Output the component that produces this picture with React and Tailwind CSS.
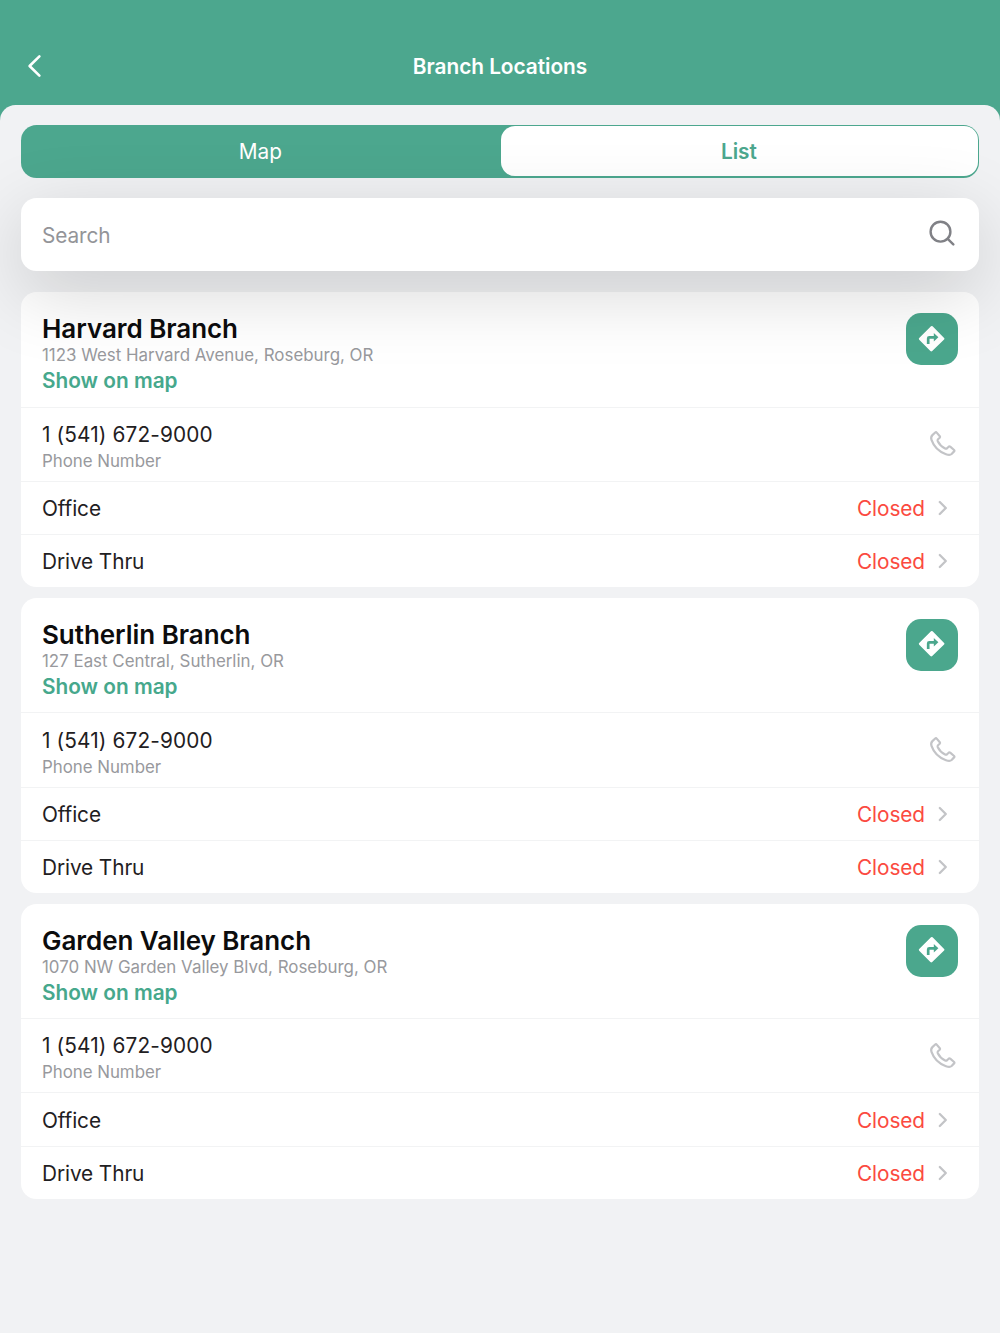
import React from "react";

const branches = [
  { name: "Harvard Branch", address: "1123 West Harvard Avenue, Roseburg, OR", phone: "1 (541) 672-9000" },
  { name: "Sutherlin Branch", address: "127 East Central, Sutherlin, OR", phone: "1 (541) 672-9000" },
  { name: "Garden Valley Branch", address: "1070 NW Garden Valley Blvd, Roseburg, OR", phone: "1 (541) 672-9000" },
];

function HoursRow({ label }) {
  return (
    <div className="flex h-[53.3px] items-center justify-between border-t-[1.5px] border-[#f2f3f4] pt-[2px] pl-[21px] pr-[30px]">
      <span className="text-[20.8px] leading-[26px] tracking-[-0.1px] text-[#1f2022]">{label}</span>
      <span className="flex items-center gap-[12px]">
        <span className="text-[20.8px] leading-[26px] tracking-[-0.08px] text-[#fb4a40]">Closed</span>
        <svg className="-mt-[2px] h-[16px] w-[12px]" viewBox="0 0 12 16" fill="none" stroke="#c3c4c7" strokeWidth="2.3" strokeLinecap="round" strokeLinejoin="round">
          <path d="M2.800 2 8.800 8l-6 6" />
        </svg>
      </span>
    </div>
  );
}

function BranchCard({ branch }) {
  return (
    <article className="h-[295.2px] overflow-hidden rounded-[15.6px] bg-white">
      <div className="flex h-[114.4px] items-start justify-between px-[21px] pt-[20.8px]">
        <div>
          <h2 className="text-[26px] font-semibold leading-[32px] tracking-[-0.05px] text-[#0c0c0d]">{branch.name}</h2>
          <p className="text-[16.9px] leading-[20px] text-[#98999d]">{branch.address}</p>
          <a className="block pt-[3px] text-[20.8px] font-semibold leading-[26px] text-[#46a88c]">Show on map</a>
        </div>
        <button className="flex size-[52px] items-center justify-center rounded-[15px] bg-[#4ba78d]">
          <svg className="-mt-px size-[28px]" viewBox="0 0 28 28">
            <path d="M13 1.3 1.2 13a1.2 1.2 0 0 0 0 1.7L12.4 26a1.3 1.3 0 0 0 1.8 0l11.900-11.400a1.2 1.2 0 0 0 0-1.700L14.600 1.300a1.200 1.200 0 0 0-1.600 0Z" fill="#fff" />
            <path d="M10.200 19v-5.600q0-1.100 1.100-1.100h5.400" fill="none" stroke="#4ba78d" strokeWidth="2.700" />
            <path d="M15.800 8.100 20.400 12.300 15.800 16.500Z" fill="#4ba78d" />
          </svg>
        </button>
      </div>
      <div className="flex h-[74.200px] items-center justify-between border-t-[1.5px] border-[#f2f3f4] pl-[21px] pr-[22px]">
        <div className="pt-[5px]">
          <p className="text-[20.8px] leading-[28px] tracking-[0.13px] text-[#1f2022]">{branch.phone}</p>
          <p className="text-[16.9px] leading-[24px] tracking-[-0.04px] text-[#98999d]">Phone Number</p>
        </div>
        <svg className="size-[28px]" viewBox="0 0 28 28" fill="none" stroke="#c3c4c7" strokeWidth="2.200" strokeLinejoin="round" strokeLinecap="round">
          <path d="M3.400 5.100 6.200 2.500q.8-.7 1.500.1l3.100 3.600q.6.800-.1 1.500L9 9.200c-.6.600-.5 1.300-.2 2 1.500 3.200 4 5.700 7.300 7.300.7.300 1.300.3 1.900-.2l1.700-1.600q.7-.6 1.500 0l3.900 3.300q.7.700 0 1.400l-2.500 2.600c-1.200 1.100-3.600.9-5.600.2C9.900 21.700 4.800 16.600 2.500 9.900 1.900 8.200 2.200 6.300 3.400 5.100Z" />
        </svg>
      </div>
      <HoursRow label="Office" />
      <HoursRow label="Drive Thru" />
    </article>
  );
}

export default function App() {
  return (
    <div className="h-[1334px] overflow-hidden bg-white font-['Inter',sans-serif]">
      <div className="flex h-[1333px] flex-col bg-[#4ca78e]">
        <header className="grid h-[104.5px] shrink-0 grid-cols-3 items-end px-[26px] pb-[25px]">
          <button className="flex h-[28px] items-center">
            <svg className="h-[24px] w-[16px]" viewBox="0 0 16 24" fill="none" stroke="#fff" strokeWidth="2.600" strokeLinecap="round" strokeLinejoin="round">
              <path d="M13.400 2.400 3.600 12l9.800 9.600" />
            </svg>
          </button>
          <h1 className="text-center text-[20.8px] font-semibold leading-[26px] tracking-[-0.03px] text-white">Branch Locations</h1>
        </header>
        <main className="flex flex-1 flex-col rounded-t-[15.6px] bg-[#f1f2f4] px-[21px] pt-[20.500px]">
          <div className="flex h-[52.500px] rounded-[15.6px] bg-[#4ca78e] p-[1.400px] text-[20.8px]">
            <button className="w-[478.800px] pr-[3px] text-white">Map</button>
            <button className="flex-1 rounded-[14px] bg-white pr-[1px] font-semibold text-[#4ca78e]">List</button>
          </div>
          <div className="relative z-10 mt-[20.500px] flex h-[73px] items-center justify-between rounded-[15.6px] bg-white pl-[21px] pr-[24.500px] shadow-[0_20px_76px_rgba(0,0,0,0.17)]">
            <span className="pt-[2px] text-[20.8px] tracking-[-0.1px] text-[#939498]">Search</span>
            <svg className="-mt-[3px] size-[26px]" viewBox="0 0 26 26" fill="none" stroke="#808186" strokeWidth="2.400" strokeLinecap="round">
              <circle cx="11.500" cy="11.700" r="9.900" />
              <path d="m18.700 18.900 5.600 5.500" />
            </svg>
          </div>
          <section className="mt-[21.300px] flex flex-col gap-[10.600px]">
            {branches.map((b) => (
              <BranchCard key={b.name} branch={b} />
            ))}
          </section>
        </main>
      </div>
    </div>
  );
}
